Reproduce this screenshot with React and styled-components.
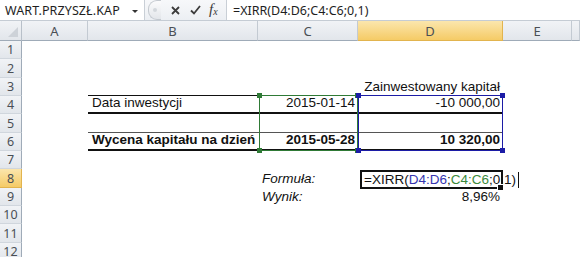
import React from 'react'
import styled, { createGlobalStyle, css } from 'styled-components'

const Global = createGlobalStyle`
  html, body { margin: 0; padding: 0; background: #fff; }
  body { width: 580px; height: 257px; overflow: hidden; }
`

const Page = styled.div`
  width: 580px;
  height: 257px;
  overflow: hidden;
  display: flex;
  flex-direction: column;
  background: #fff;
`

/* ---------- formula bar ---------- */
const FormulaBar = styled.div`
  height: 22px;
  display: flex;
  align-items: stretch;
  background: #e9edf2;
  border-bottom: 1px solid #c5ccd4;
  font-family: 'Noto Sans', 'Open Sans', sans-serif;
  font-size: 12.5px;
  color: #1e1e1e;
`
const NameBox = styled.div`
  width: 145px;
  display: flex;
  align-items: center;
  justify-content: space-between;
  padding: 0 6px 0 5px;
  box-sizing: border-box;
  background: #fff;
  border-right: 1px solid #c9cfd6;
  letter-spacing: 0.1px;
`
const Arrow = styled.span`
  width: 0;
  height: 0;
  border-left: 3px solid transparent;
  border-right: 3px solid transparent;
  border-top: 3px solid #333;
  margin-top: 2px;
`
const Tools = styled.div`
  width: 82px;
  display: flex;
  align-items: center;
  gap: 10px;
  padding-left: 3px;
  box-sizing: border-box;
  background: linear-gradient(#f7f8fa, #eceff3);
  border-right: 1px solid #c9cfd6;
`
const Grip = styled.span`
  width: 12px;
  height: 18px;
  border: 1px solid #c4c9cf;
  border-right: none;
  border-radius: 9px 0 0 9px;
  background: linear-gradient(#fbfbfc, #e3e6ea);
  display: flex;
  align-items: center;
  justify-content: center;
  &::after {
    content: '';
    width: 4px;
    height: 4px;
    border-radius: 2px;
    background: #d3d7dc;
  }
`
const ToolIcon = styled.span`
  display: flex;
  align-items: center;
  color: #3c3c3c;
`
const Fx = styled.span`
  font-family: 'Liberation Serif', serif;
  font-style: italic;
  font-size: 15px;
  line-height: 15px;
  color: #3a3a3a;
  margin-left: -2px;
  & sub { font-size: 10px; vertical-align: -1px; }
`
const FormulaInput = styled.div`
  flex: 1;
  display: flex;
  align-items: center;
  padding-left: 6px;
  background: #fff;
`

/* ---------- sheet ---------- */
const Sheet = styled.div`
  flex: 1;
  display: grid;
  grid-template-columns: 22px 66px 170px 100px 145px 69px 1fr;
  grid-template-rows: 20px repeat(12, 18.35px);
  font-family: 'Liberation Sans', Arial, sans-serif;
  font-size: 13.5px;
  color: #111;
`
const headerBase = css`
  display: flex;
  align-items: center;
  justify-content: center;
  box-sizing: border-box;
  font-family: 'Noto Sans', 'Open Sans', sans-serif;
  font-size: 13px;
  color: #4a4f55;
  background: ${p => (p.$active ? 'linear-gradient(#fbe6ad, #f5cb66)' : 'linear-gradient(#f1f3f6, #e2e6eb)')};
`
const Corner = styled.div`
  ${headerBase};
  border-right: 1px solid #b8c0c9;
  border-bottom: 1px solid #9fabb8;
  justify-content: flex-end;
  align-items: flex-end;
  padding: 0 3px 3px 0;
  &::after {
    content: '';
    width: 0;
    height: 0;
    border-left: 10px solid transparent;
    border-bottom: 10px solid #cdd2d8;
  }
`
const ColHead = styled.div`
  ${headerBase};
  border-right: 1px solid ${p => (p.$active ? '#e2b44e' : '#c3cad2')};
  border-bottom: 1px solid ${p => (p.$active ? '#e2b44e' : '#9fabb8')};
`
const RowHead = styled.div`
  ${headerBase};
  grid-column: 1;
  border-right: 1px solid ${p => (p.$active ? '#e2b44e' : '#9fabb8')};
  border-bottom: 1px solid ${p => (p.$active ? '#e2b44e' : '#d0d6dd')};
  font-size: 12.5px;
`
const Cell = styled.div`
  grid-column: ${p => p.$col};
  grid-row: ${p => p.$row + 1};
  display: flex;
  align-items: flex-end;
  justify-content: ${p => (p.$right ? 'flex-end' : 'flex-start')};
  box-sizing: border-box;
  padding: 0 ${p => (p.$right ? '3px' : '0')} 1px ${p => (p.$right ? '0' : '4px')};
  white-space: nowrap;
  overflow: visible;
  line-height: 16px;
  font-weight: ${p => (p.$bold ? 700 : 400)};
  font-style: ${p => (p.$italic ? 'italic' : 'normal')};
  border-top: ${p => p.$top || 'none'};
  border-bottom: ${p => p.$bottom || 'none'};
  margin-top: ${p => (p.$top ? '-1px' : '0')};
`
const RangeBox = styled.div`
  grid-column: ${p => p.$col};
  grid-row: ${p => p.$rows};
  border: 1px solid ${p => p.$color};
  position: relative;
  z-index: 2;
  pointer-events: none;
  margin-top: -1px;
  margin-left: ${p => p.$inset || 0};
`
const Handle = styled.span`
  position: absolute;
  width: 5px;
  height: 5px;
  background: ${p => p.$color};
  ${p => (p.$v === 'top' ? 'top: -3px;' : 'bottom: -3px;')}
  ${p => (p.$h === 'left' ? 'left: -3px;' : 'right: -3px;')}
`
const EditBox = styled.div`
  grid-column: 5;
  grid-row: 9;
  position: relative;
  z-index: 3;
  border: 2px solid #111;
  margin: 1px 0 -1px 2px;
  display: flex;
  align-items: center;
  padding-left: 2px;
  white-space: nowrap;
  line-height: 15px;
  &::after {
    content: '';
    position: absolute;
    right: -3px;
    bottom: -4px;
    width: 5px;
    height: 5px;
    background: #111;
    border: 1px solid #fff;
  }
`
const Ref = styled.span`
  color: ${p => p.$color};
`
const Caret = styled.span`
  display: inline-block;
  flex: none;
  width: 1px;
  height: 16px;
  background: #111;
  margin-left: 2px;
`

const cols = ['A', 'B', 'C', 'D', 'E', '']
const black = '1px solid #111'
const thick = '2px solid #111'

function Corners({ color }) {
  return ['top', 'bottom'].flatMap(v =>
    ['left', 'right'].map(h => <Handle key={v + h} $v={v} $h={h} $color={color} />)
  )
}

export default function App() {
  return (
    <Page>
      <Global />
      <FormulaBar>
        <NameBox>
          WART.PRZYSZŁ.KAP
          <Arrow />
        </NameBox>
        <Tools>
          <Grip />
          <ToolIcon>
            <svg width="9" height="9" viewBox="0 0 9 9">
              <path d="M1 1 L8 8 M8 1 L1 8" stroke="#3c3c3c" strokeWidth="1.8" />
            </svg>
          </ToolIcon>
          <ToolIcon>
            <svg width="11" height="10" viewBox="0 0 11 10">
              <path d="M1 5.5 L4 8.5 L10 1" stroke="#3c3c3c" strokeWidth="1.8" fill="none" />
            </svg>
          </ToolIcon>
          <Fx>
            f<sub>x</sub>
          </Fx>
        </Tools>
        <FormulaInput>=XIRR(D4:D6;C4:C6;0,1)</FormulaInput>
      </FormulaBar>

      <Sheet>
        <Corner />
        {cols.map((c, i) => (
          <ColHead key={i} $active={c === 'D'}>
            {c}
          </ColHead>
        ))}
        {Array.from({ length: 12 }, (_, i) => (
          <RowHead key={i} $active={i === 7} style={{ gridRow: i + 2 }}>
            {i + 1}
          </RowHead>
        ))}

        <Cell $col={5} $row={3} $right>
          Zainwestowany kapitał
        </Cell>

        <Cell $col={3} $row={4} $top={black} $bottom={thick}>
          Data inwestycji
        </Cell>
        <Cell $col={4} $row={4} $top={black} $bottom={thick} $right>
          2015-01-14
        </Cell>
        <Cell $col={5} $row={4} $top={black} $bottom={thick} $right>
          -10 000,00
        </Cell>

        <Cell $col={3} $row={6} $top="1px solid #555" $bottom={thick} $bold>
          Wycena kapitału na dzień
        </Cell>
        <Cell $col={4} $row={6} $top="1px solid #555" $bottom={thick} $right $bold>
          2015-05-28
        </Cell>
        <Cell $col={5} $row={6} $top="1px solid #555" $bottom={thick} $right $bold>
          10 320,00
        </Cell>

        <Cell $col={4} $row={8} $italic>
          Formuła:
        </Cell>
        <Cell $col={4} $row={9} $italic>
          Wynik:
        </Cell>
        <Cell $col={5} $row={9} $right>
          8,96%
        </Cell>

        <RangeBox $col={4} $rows="5 / 8" $color="#2f7a36" $inset="1px">
          <Corners color="#2f7a36" />
        </RangeBox>
        <RangeBox $col={5} $rows="5 / 8" $color="#1c1ca6">
          <Corners color="#1c1ca6" />
        </RangeBox>

        <EditBox>
          =XIRR(<Ref $color="#3535b0">D4:D6</Ref>;<Ref $color="#3c8a3c">C4:C6</Ref>;0,1)
          <Caret />
        </EditBox>
      </Sheet>
    </Page>
  )
}
